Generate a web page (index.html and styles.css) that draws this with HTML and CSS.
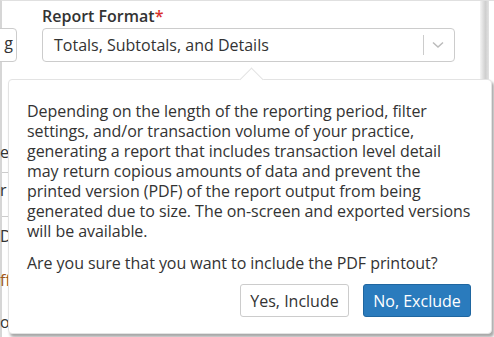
FILE: index.html
```html
<!DOCTYPE html>
<html>
<head>
<meta charset="utf-8">
<link rel="stylesheet" href="styles.css">
</head>
<body>
<div class="frame">
  <div class="scrollbar"></div>
  <div class="form-row">
    <button class="stub-btn">g</button>
    <div class="field">
      <label class="label">Report Format<span class="req">*</span></label>
      <div class="select">
        <span class="select-value">Totals, Subtotals, and Details</span>
        <span class="select-sep"></span>
        <svg class="chev" width="12" height="8" viewBox="0 0 12 8"><path d="M1 1.5 L6 6 L11 1.5" fill="none" stroke="#bbb" stroke-width="1.5"/></svg>
      </div>
    </div>
  </div>
  <div class="behind">
    <div class="frag f1">e</div>
    <div class="frag f2">r</div>
    <div class="frag f3">D</div>
    <div class="frag f4">ff</div>
    <div class="frag f5">o</div>
  </div>
  <div class="popover">
    <div class="arrow"></div>
    <p class="msg">Depending on the length of the reporting period, filter<br>settings, and/or transaction volume of your practice,<br>generating a report that includes transaction level detail<br>may return copious amounts of data and prevent the<br>printed version (PDF) of the report output from being<br>generated due to size. The on-screen and exported versions<br>will be available.</p>
    <p class="msg q">Are you sure that you want to include the PDF printout?</p>
    <div class="actions">
      <button class="btn btn-default">Yes, Include</button>
      <button class="btn btn-primary">No, Exclude</button>
    </div>
  </div>
</div>
</body>
</html>
```
FILE: styles.css
```css
html, body { margin: 0; padding: 0; background: #fff; }
body { font-family: "Open Sans", "Noto Sans", sans-serif; color: #333; width: 494px; height: 337px; overflow: hidden; }
.frame { position: relative; height: 337px; border-left: 2px solid #d6d6d6; border-top: 1px solid #e0e0e0; box-sizing: border-box; }
.scrollbar { position: absolute; left: 478px; top: 0; width: 9px; height: 100px; background: linear-gradient(to right, #f4f4f4, #cfcfcf 60%, #e2e2e2); }
.form-row { display: flex; padding-top: 4px; }
.stub-btn { margin-left: -30px; margin-top: 23px; width: 45px; height: 34px; border: 1px solid #ccc; border-radius: 4px; background: #fff; font: 16px "Open Sans", sans-serif; color: #333; text-align: right; padding: 0 3px 4px 0; }
.field { margin-left: 25px; width: 413px; }
.label { display: block; font-size: 16px; font-weight: 600; line-height: 22px; color: #333; }
.req { color: #d9302c; font-weight: 600; }
.select { margin-top: 1px; height: 34px; border: 1px solid #ccc; border-radius: 4px; display: flex; align-items: center; box-sizing: border-box; }
.select-value { flex: 1; padding-left: 11px; font-size: 16px; color: #333; }
.select-sep { width: 1px; height: 20px; background: #ccc; }
.chev { margin: 0 10px 0 8px; }
.behind { position: absolute; left: 0; top: 138px; width: 10px; }
.frag { position: absolute; left: -2px; font-size: 16px; }
.f1 { top: 2px; color: #333; }
.f2 { top: 40px; color: #333; }
.f3 { top: 86px; color: #333; }
.f4 { top: 130px; color: #a05a1c; }
.f5 { top: 172px; color: #333; }
.behind::before { content: ""; position: absolute; left: 0; top: 33px; width: 8px; height: 1px; background: #ccc; }
.behind::after { content: ""; position: absolute; left: 0; top: 77px; width: 8px; height: 1px; background: #ccc; }
.popover { position: absolute; left: 6px; top: 78px; width: 484px; height: 255px; box-sizing: border-box; background: #fff; border: 1px solid #e3e3e3; border-radius: 4px; box-shadow: 2px 3px 3px rgba(0,0,0,0.35); padding: 21px 12px 0 18px; }
.arrow { position: absolute; left: 234px; top: -9px; width: 16px; height: 16px; background: #fff; border-left: 1px solid #e3e3e3; border-top: 1px solid #e3e3e3; transform: rotate(45deg); }
.msg { margin: 0; font-size: 16px; letter-spacing: -0.05px; line-height: 20px; color: #333; position: relative; white-space: nowrap; }
.q { margin-top: 12px; }
.actions { display: flex; justify-content: flex-end; gap: 14px; margin-top: 11px; padding-right: 8px; }
.btn { font: 16px "Open Sans", sans-serif; height: 33px; padding: 0; border-radius: 3px; white-space: nowrap; }
.btn-default { background: #fff; border: 1px solid #ccc; color: #333; width: 109px; }
.btn-primary { background: #2a7bbd; border: 1px solid #1f66a0; color: #fff; width: 108px; }
```
